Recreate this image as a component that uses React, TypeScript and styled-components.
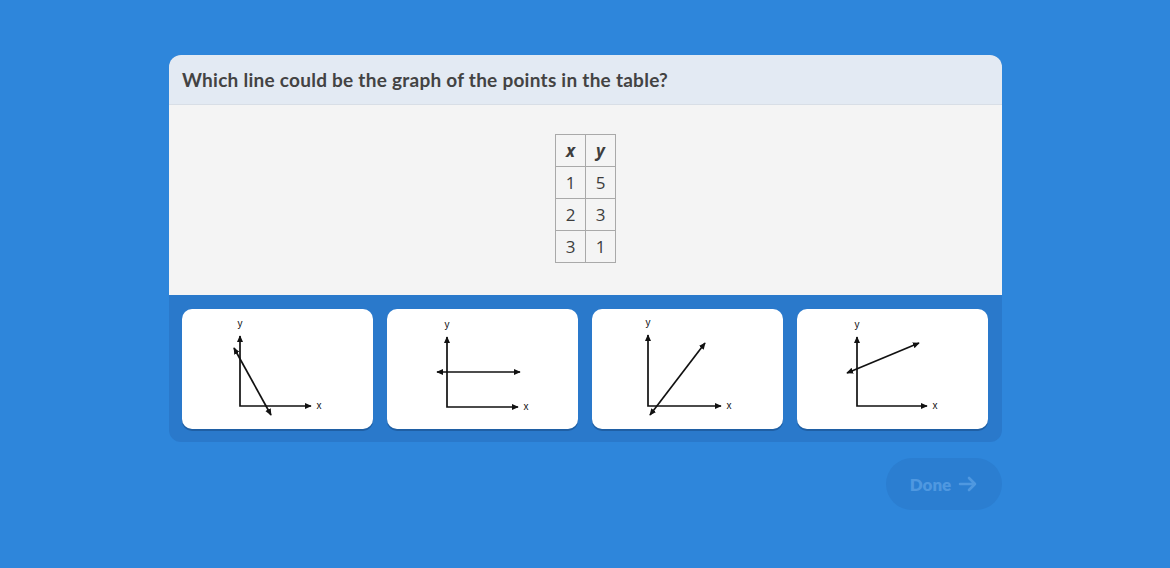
import React from "react";
import styled, { createGlobalStyle } from "styled-components";

const GlobalStyle = createGlobalStyle`
  html, body {
    margin: 0;
    padding: 0;
    background: #2e86db;
  }
  body {
    font-family: "Open Sans", "Liberation Sans", sans-serif;
  }
`;

const Page = styled.div`
  width: 1170px;
  height: 568px;
  box-sizing: border-box;
  padding: 55px 168px 0 169px;
  display: flex;
  flex-direction: column;
  align-items: stretch;
`;

const Quiz = styled.div`
  border-radius: 12px;
  overflow: hidden;
  background: #2a79cb;
`;

const Header = styled.div`
  height: 50px;
  box-sizing: border-box;
  padding: 0 13px;
  display: flex;
  align-items: center;
  background: #e3eaf3;
  border-bottom: 1px solid #d8dee6;
  font-family: "Lato", "Liberation Sans", sans-serif;
  font-weight: 700;
  font-size: 19px;
  color: #434343;
  letter-spacing: 0.26px;
`;

const Body = styled.div`
  height: 190px;
  box-sizing: border-box;
  background: #f4f4f4;
  display: flex;
  justify-content: center;
  padding-top: 29px;
`;

const Table = styled.table`
  border-collapse: collapse;
  align-self: flex-start;
  color: #3d3d3d;
  font-size: 17px;
`;

const Cell = styled.td<{ $head?: boolean }>`
  width: 29px;
  height: 31px;
  padding: 0;
  text-align: center;
  border: 1px solid #a9a9a9;
  font-style: ${({ $head }) => ($head ? "italic" : "normal")};
  font-weight: ${({ $head }) => ($head ? 700 : 400)};
`;

const Answers = styled.div`
  display: grid;
  grid-template-columns: repeat(4, 191px);
  gap: 14px;
  padding: 14px 13px 13px;
`;

const Choice = styled.button`
  height: 120px;
  padding: 0;
  border: none;
  border-radius: 10px;
  background: #fff;
  box-shadow: 0 2px 0 #1f5fa4;
  cursor: pointer;
  display: block;
`;

const Footer = styled.div`
  display: flex;
  justify-content: flex-end;
  padding-top: 16px;
`;

const DoneButton = styled.button`
  width: 116px;
  height: 52px;
  border: none;
  border-radius: 26px;
  background: #2b7ed1;
  color: #4f98e0;
  font-family: "Lato", "Liberation Sans", sans-serif;
  font-weight: 800;
  font-size: 17px;
  display: flex;
  align-items: center;
  justify-content: center;
  gap: 7px;
  cursor: default;
`;

type Pt = [number, number];

interface GraphProps {
  ax: number;
  top: number;
  oy: number;
  xEnd: number;
  line: [Pt, Pt];
}

const Graph: React.FC<GraphProps> = ({ ax, top, oy, xEnd, line }) => {
  const [a, b] = line;
  return (
    <svg width="191" height="120" viewBox="0 0 191 120">
      <defs>
        <marker id="ar" viewBox="0 0 10 10" refX="8" refY="5" markerWidth="4.5" markerHeight="4.5" orient="auto-start-reverse">
          <path d="M0 1 L9 5 L0 9 Z" fill="#111" />
        </marker>
      </defs>
      <g stroke="#111" strokeWidth="1.7" fill="none">
        <polyline points={`${ax},${top} ${ax},${oy} ${xEnd},${oy}`} markerStart="url(#ar)" markerEnd="url(#ar)" />
        <line x1={a[0]} y1={a[1]} x2={b[0]} y2={b[1]} markerStart="url(#ar)" markerEnd="url(#ar)" />
      </g>
      <text x={ax} y={top - 9} fontSize="10" textAnchor="middle" fill="#111" fontFamily="Liberation Sans, sans-serif">y</text>
      <text x={xEnd + 8} y={oy + 3} fontSize="10" textAnchor="middle" fill="#111" fontFamily="Liberation Sans, sans-serif">x</text>
    </svg>
  );
};

const graphs: GraphProps[] = [
  { ax: 58, top: 27, oy: 97, xEnd: 129, line: [[52, 39], [89, 106]] },
  { ax: 60, top: 28, oy: 98, xEnd: 131, line: [[50, 63], [133, 63]] },
  { ax: 56, top: 26, oy: 97, xEnd: 129, line: [[58, 106], [113, 34]] },
  { ax: 60, top: 28, oy: 97, xEnd: 130, line: [[50, 64], [122, 34]] },
];

const rows = [
  [1, 5],
  [2, 3],
  [3, 1],
];

export default function App() {
  return (
    <>
      <GlobalStyle />
      <Page>
        <Quiz>
          <Header>Which line could be the graph of the points in the table?</Header>
          <Body>
            <Table>
              <tbody>
                <tr>
                  <Cell $head>x</Cell>
                  <Cell $head>y</Cell>
                </tr>
                {rows.map(([x, y]) => (
                  <tr key={x}>
                    <Cell>{x}</Cell>
                    <Cell>{y}</Cell>
                  </tr>
                ))}
              </tbody>
            </Table>
          </Body>
          <Answers>
            {graphs.map((g, i) => (
              <Choice key={i}>
                <Graph {...g} />
              </Choice>
            ))}
          </Answers>
        </Quiz>
        <Footer>
          <DoneButton>
            Done
            <svg width="20" height="16" viewBox="0 0 20 16" fill="none" stroke="#4f98e0" strokeWidth="2.6" strokeLinecap="round" strokeLinejoin="round">
              <path d="M2 8 H17 M11 2 L17 8 L11 14" />
            </svg>
          </DoneButton>
        </Footer>
      </Page>
    </>
  );
}
